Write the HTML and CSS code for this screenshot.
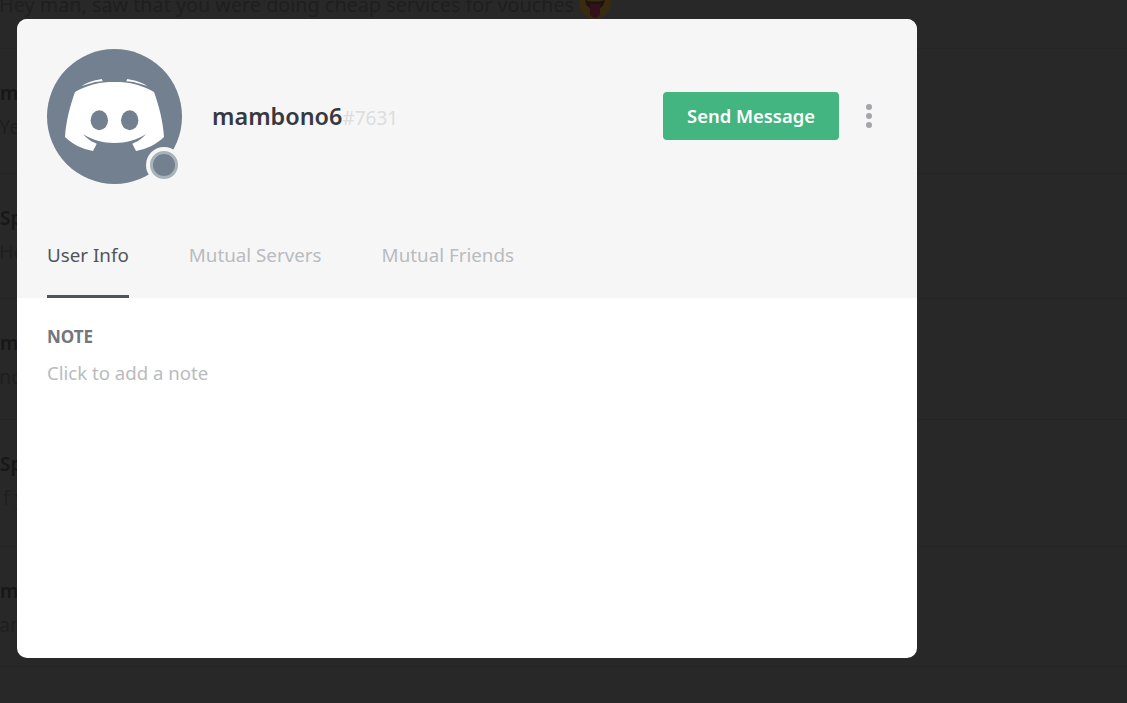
FILE: index.html
```html
<!DOCTYPE html>
<html lang="en">
<head>
    <meta charset="UTF-8">
    <title>mambono6 profile</title>
    <link rel="stylesheet" href="styles.css">
</head>
<body>
    <div class="chat-list">
        <div class="chat-row first-row">
            <div class="chat-text">Hey man, saw that you were doing cheap services for vouches
                <svg class="emoji" viewBox="0 0 32 32"><circle cx="16" cy="16" r="16" fill="#392a10"/><path d="M6 13c6 2 14 2 20 0-1 6-4 9-10 9S7 19 6 13z" fill="#1c1410"/><path d="M11 17h10v9a5 5 0 0 1-10 0z" fill="#33101a"/></svg>
            </div>
        </div>
        <div class="chat-row"><div class="chat-name">mambono6</div><div class="chat-text">Yes</div></div>
        <div class="chat-row"><div class="chat-name">Sparky</div><div class="chat-text">Hello</div></div>
        <div class="chat-row row-short"><div class="chat-name">mambono6</div><div class="chat-text">no</div></div>
        <div class="chat-row row-tall"><div class="chat-name">Sparky</div><div class="chat-text indent">f you</div></div>
        <div class="chat-row row-shortest"><div class="chat-name">mambono6</div><div class="chat-text">and</div></div>
        <div class="chat-row"><div class="chat-name">Sparky</div></div>
    </div>

    <div class="modal">
        <div class="modal-header">
            <div class="profile-row">
                <div class="avatar">
                    <svg class="avatar-logo" viewBox="0 0 135 135">
                        <path d="M18 88C19 72 23 57 28 43C33 40 40 37 46 35.500C53 33.500 60 33 67.500 33C75 33 82 33.500 89 35.500C95 37 102 40 107 43C112 57 116 72 117 88C110 95 100 100 89 102L85.300 94.700C89 93.500 95 90 98.700 85.300C90 91 79 94 67.500 94C56 94 45 91 36.300 85.300C40 90 46 93.500 49.700 94.700L46 102C35 100 25 95 18 88Z" fill="#fff"/>
                        <path d="M34.700 37C38 35 41 33.500 45 32.300C48 31.300 52 30.500 54.700 30L55.700 32.300C52 32.500 48 33 45 34C41 35 38 36 34.700 37Z" fill="#fff"/>
                        <path d="M100.300 37C97 35 94 33.500 90 32.300C87 31.300 83 30.500 80.300 30L79.300 32.300C83 32.500 87 33 90 34C94 35 97 36 100.300 37Z" fill="#fff"/>
                        <ellipse cx="52.300" cy="71.300" rx="8.700" ry="10" fill="#738090"/>
                        <ellipse cx="82.700" cy="71.300" rx="8.700" ry="10" fill="#738090"/>
                    </svg>
                    <span class="status-dot"></span>
                </div>
                <div class="user-name">mambono6<span class="user-tag">#7631</span></div>
                <button class="send-btn">Send Message</button>
                <div class="more-icon"><i></i><i></i><i></i></div>
            </div>
            <div class="tabs">
                <div class="tab active">User Info</div>
                <div class="tab">Mutual Servers</div>
                <div class="tab">Mutual Friends</div>
            </div>
        </div>
        <div class="modal-body">
            <h3>NOTE</h3>
            <div class="note-input">Click to add a note</div>
        </div>
    </div>
</body>
</html>
```

FILE: styles.css
```css
* {
    box-sizing: border-box;
}

html, body {
    height: 100%;
}

body {
    margin: 0;
    overflow: hidden;
    background-color: #282828;
    font-family: "Noto Sans", Lato, sans-serif;
}

.chat-list {
    margin-top: -76px;
    height: calc(100% + 76px);
    overflow: hidden;
}

.chat-row {
    height: 125px;
    padding-top: 27px;
    border-bottom: 1px solid #242424;
}

.first-row {
    padding-top: 64px;
}

.row-short {
    height: 121px;
}

.row-tall {
    height: 127px;
}

.row-shortest {
    height: 120px;
}

.chat-name {
    font-size: 19px;
    font-weight: 600;
    line-height: 34px;
    color: #171717;
}

.chat-text {
    font-size: 19.800px;
    line-height: 34px;
    color: #1f1f1f;
    white-space: nowrap;
    margin-left: -1px;
}

.chat-text.indent {
    margin-left: 3px;
}

.emoji {
    width: 32px;
    height: 32px;
    vertical-align: middle;
    margin-top: -8px;
}

.modal {
    position: absolute;
    left: 17px;
    top: 19px;
    width: 900px;
    height: 639px;
    background-color: #fff;
    border-radius: 10px;
    overflow: hidden;
}

.modal-header {
    height: 279px;
    background-color: #f6f6f6;
    display: flex;
    flex-direction: column;
    justify-content: space-between;
    padding: 30px 30px 0;
}

.profile-row {
    display: flex;
    align-items: center;
    height: 135px;
}

.avatar {
    position: relative;
    width: 135px;
    height: 135px;
    border-radius: 50%;
    background-color: #738090;
    flex-shrink: 0;
}

.avatar-logo {
    display: block;
    width: 135px;
    height: 135px;
}

.status-dot {
    position: absolute;
    left: 103px;
    top: 102px;
    width: 28px;
    height: 28px;
    border-radius: 50%;
    background-color: #738090;
    border: 3px solid #a8b2bb;
    box-shadow: 0 0 0 4px #f6f6f6;
}

.user-name {
    margin-left: 30px;
    margin-bottom: 2px;
    font-size: 23.400px;
    font-weight: 600;
    color: #36393f;
    flex-grow: 1;
}

.user-tag {
    font-size: 19px;
    font-weight: 400;
    color: #dcddde;
}

.send-btn {
    width: 176px;
    height: 48px;
    margin-bottom: 1px;
    padding: 0 0 2px;
    border: none;
    border-radius: 4px;
    background-color: #43b581;
    color: #fff;
    font-family: inherit;
    font-size: 18.400px;
    font-weight: 600;
}

.more-icon {
    display: flex;
    flex-direction: column;
    gap: 3px;
    margin-left: 27px;
    margin-right: 15px;
    margin-bottom: 1px;
}

.more-icon i {
    width: 6px;
    height: 6px;
    border-radius: 50%;
    background-color: #a3a5ab;
}

.tabs {
    display: flex;
    gap: 60px;
}

.tab {
    height: 64px;
    padding-top: 7px;
    font-size: 18.800px;
    line-height: 28px;
    color: #b9bbbe;
}

.tab.active {
    color: #4f545c;
    border-bottom: 3px solid #4f545c;
}

.modal-body {
    padding: 28px 30px;
}

.modal-body h3 {
    margin: 0;
    font-size: 17px;
    line-height: 22px;
    font-weight: 700;
    color: #72767d;
}

.note-input {
    margin-top: 12px;
    font-size: 18.600px;
    line-height: 26px;
    color: #b9bbbe;
}
```
